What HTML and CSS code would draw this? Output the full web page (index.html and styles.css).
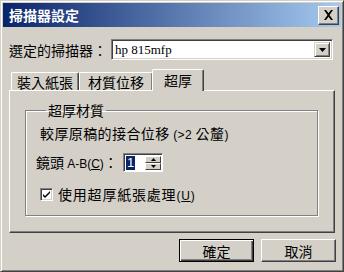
FILE: index.html
```html
<!DOCTYPE html>
<html>
<head>
<meta charset="utf-8">
<link rel="stylesheet" href="styles.css">
</head>
<body>
<div class="window">
  <div class="titlebar">
    <span class="title">掃描器設定</span>
    <span class="close"><svg width="11" height="10" viewBox="0 0 11 10"><path d="M1 0h2l2.5 3.2L8 0h2L6.5 5 10 10H8L5.5 6.8 3 10H1l3.5-5z" fill="#000"/></svg></span>
  </div>
  <div class="body">
    <div class="scanner-row">
      <span class="label">選定的掃描器：</span>
      <div class="combo">
        <span class="combo-text">hp 815mfp</span>
        <span class="combo-btn"><svg width="7" height="4" viewBox="0 0 7 4"><path d="M0 0h7L3.5 4z" fill="#000"/></svg></span>
      </div>
    </div>
    <div class="tabs">
      <span class="tab t1">裝入紙張</span>
      <span class="tab t2">材質位移</span>
      <span class="tab active">超厚</span>
    </div>
    <div class="panel">
      <fieldset class="group">
        <legend>超厚材質</legend>
        <div class="desc">較厚原稿的接合位移 <span class="lat">(&gt;2</span> 公釐<span class="lat">)</span></div>
        <div class="lens-row">
          <span class="lens-label">鏡頭 <span class="lat">A-B(<u>C</u>)</span>：</span>
          <div class="spin">
            <span class="spin-val"><span class="sel">1</span></span>
            <span class="spin-btns">
              <span class="sb"><svg width="5" height="3" viewBox="0 0 5 3"><path d="M2.5 0L5 3H0z" fill="#000"/></svg></span>
              <span class="sb"><svg width="5" height="3" viewBox="0 0 5 3"><path d="M0 0h5L2.5 3z" fill="#000"/></svg></span>
            </span>
          </div>
        </div>
        <div class="check-row">
          <span class="checkbox"><svg width="9" height="9" viewBox="0 0 9 9"><path d="M1 4l2 2 5-5v2L3 8 1 6z" fill="#000"/></svg></span>
          <span class="check-label">使用超厚紙張處理<span class="lat">(<u>U</u>)</span></span>
        </div>
      </fieldset>
    </div>
    <div class="buttons">
      <span class="btn default">確定</span>
      <span class="btn">取消</span>
    </div>
  </div>
</div>
</body>
</html>
```
FILE: styles.css
```css
* { box-sizing: border-box; }
html, body { margin: 0; padding: 0; background: #d4d0c8; }
body {
  font-family: "Noto Sans CJK TC", "Liberation Sans", sans-serif;
  font-size: 14px;
  color: #000;
}
.lat {
  font-family: "Liberation Sans", sans-serif;
  font-size: 12px;
}
.window {
  width: 344px;
  height: 272px;
  background: #d4d0c8;
  border-top: 1px solid #d4d0c8;
  border-left: 1px solid #d4d0c8;
  border-right: 1px solid #404040;
  border-bottom: 1px solid #404040;
  box-shadow: inset 1px 1px 0 #fff, inset -1px -1px 0 #808080;
  padding: 2px;
  display: flex;
  flex-direction: column;
}
.titlebar {
  height: 24px;
  flex: none;
  background: linear-gradient(to right, #0a246a, #a6caf0);
  display: flex;
  align-items: center;
  justify-content: space-between;
  padding: 0 2px 0 6px;
}
.title {
  color: #fff;
  font-weight: bold;
  font-size: 14px;
  line-height: 14px;
}
.close {
  width: 21px;
  height: 19px;
  background: #d4d0c8;
  border-top: 1px solid #fff;
  border-left: 1px solid #fff;
  border-right: 1px solid #404040;
  border-bottom: 1px solid #404040;
  box-shadow: inset -1px -1px 0 #808080;
  display: flex;
  align-items: center;
  justify-content: center;
}
.body {
  flex: 1;
  padding: 12px 5px 0 6px;
  display: flex;
  flex-direction: column;
}
.scanner-row {
  display: flex;
  align-items: center;
  height: 21px;
}
.label { width: 102px; line-height: 16px; }
.combo {
  width: 222px;
  height: 21px;
  background: #fff;
  border-top: 1px solid #808080;
  border-left: 1px solid #808080;
  border-right: 1px solid #fff;
  border-bottom: 1px solid #fff;
  box-shadow: inset 1px 1px 0 #404040, inset -1px -1px 0 #d4d0c8;
  display: flex;
  align-items: center;
  padding: 2px;
}
.combo-text {
  flex: 1;
  font-family: "Liberation Serif", serif;
  font-size: 13px;
  padding-left: 1px;
}
.combo-btn {
  width: 16px;
  height: 15px;
  background: #d4d0c8;
  border-top: 1px solid #d4d0c8;
  border-left: 1px solid #d4d0c8;
  border-right: 1px solid #404040;
  border-bottom: 1px solid #404040;
  box-shadow: inset 1px 1px 0 #fff, inset -1px -1px 0 #808080;
  display: flex;
  align-items: center;
  justify-content: center;
}
.tabs {
  display: flex;
  margin-top: 9px;
  padding-left: 2px;
  height: 21px;
  align-items: flex-end;
  position: relative;
  z-index: 1;
}
.tab {
  height: 18px;
  border-top: 1px solid #fff;
  border-left: 1px solid #fff;
  border-right: 1px solid #404040;
  box-shadow: inset -1px 0 0 #808080;
  border-radius: 2px 2px 0 0;
  display: flex;
  align-items: center;
  justify-content: center;
  line-height: 16px;
}
.t1 { width: 68px; }
.t2 { width: 74px; }
.tab.active {
  width: 52px;
  height: 22px;
  margin-left: -1px;
  margin-bottom: -1px;
  padding-bottom: 2px;
  background: #d4d0c8;
}
.panel {
  height: 143px;
  flex: none;
  margin-right: 1px;
  border-top: 1px solid #fff;
  border-left: 1px solid #fff;
  border-right: 1px solid #404040;
  border-bottom: 1px solid #404040;
  box-shadow: inset -1px -1px 0 #808080;
  padding: 12px 16px 0 15px;
}
.group {
  margin: 0;
  height: 113px;
  border: 1px solid #808080;
  box-shadow: 1px 1px 0 #fff, inset 1px 1px 0 #fff;
  padding: 4px 0 0 14px;
}
.group legend {
  padding: 0 2px;
  margin-left: 6px;
  line-height: 14px;
}
.desc { line-height: 16px; margin-top: 4px; letter-spacing: 0.4px; }
.lens-row {
  display: flex;
  align-items: center;
  margin-top: 10px;
  margin-left: -4px;
}
.lens-label { width: 87px; white-space: nowrap; line-height: 16px; }
.spin {
  width: 40px;
  height: 19px;
  background: #fff;
  border-top: 1px solid #808080;
  border-left: 1px solid #808080;
  border-right: 1px solid #fff;
  border-bottom: 1px solid #fff;
  box-shadow: inset 1px 1px 0 #404040;
  display: flex;
  padding: 2px 1px 1px 2px;
}
.spin-val { flex: 1; display: flex; align-items: center; }
.sel { background: #0a246a; color: #fff; font-family: "Liberation Sans", sans-serif; font-size: 13px; line-height: 14px; padding: 0 1px; }
.spin-btns { display: flex; flex-direction: column; width: 16px; }
.sb {
  flex: 1;
  background: #d4d0c8;
  border-top: 1px solid #fff;
  border-left: 1px solid #fff;
  border-right: 1px solid #404040;
  border-bottom: 1px solid #404040;
  display: flex;
  align-items: center;
  justify-content: center;
}
.check-row {
  display: flex;
  align-items: center;
  margin-top: 16px;
  height: 13px;
}
.check-label { letter-spacing: 0.8px; line-height: 16px; }
.checkbox {
  width: 13px;
  height: 13px;
  flex: none;
  background: #fff;
  border-top: 1px solid #808080;
  border-left: 1px solid #808080;
  border-right: 1px solid #fff;
  border-bottom: 1px solid #fff;
  box-shadow: inset 1px 1px 0 #404040, inset -1px -1px 0 #d4d0c8;
  display: flex;
  align-items: center;
  justify-content: center;
  margin-right: 5px;
}
.buttons {
  display: flex;
  justify-content: flex-end;
  gap: 7px;
  margin-top: 6px;
  margin-right: 0;
}
.btn {
  width: 75px;
  height: 23px;
  border-top: 1px solid #fff;
  border-left: 1px solid #fff;
  border-right: 1px solid #404040;
  border-bottom: 1px solid #404040;
  box-shadow: inset -1px -1px 0 #808080;
  display: flex;
  align-items: center;
  justify-content: center;
}
.btn.default {
  border: 1px solid #000;
  box-shadow: inset 1px 1px 0 #fff, inset -1px -1px 0 #404040, inset -2px -2px 0 #808080;
}
```
